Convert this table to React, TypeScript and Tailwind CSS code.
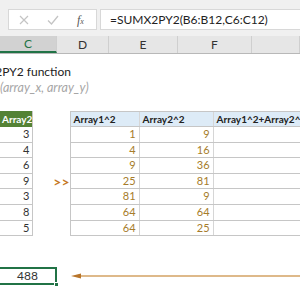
const leftVals = [3, 4, 6, 9, 3, 8, 5];
const sq1 = [1, 4, 9, 25, 81, 64, 64];
const sq2 = [9, 16, 36, 81, 9, 64, 25];

const cols = [
  { label: 'C', w: 'w-[57px]', active: true },
  { label: 'D', w: 'w-[52px]' },
  { label: 'E', w: 'w-[69px]' },
  { label: 'F', w: 'w-[74px]' },
  { label: '', w: 'flex-1' },
];

export default function App() {
  return (
    <div className="w-[300px] h-[300px] overflow-hidden bg-white font-['Lato','Liberation_Sans',sans-serif] text-[11px] text-[#222]">
      {/* formula bar */}
      <div className="h-[36px] bg-[#f0f0f0] flex pt-[9px] pl-[8px]">
        <div className="w-[89px] h-[21px] bg-white border border-[#d8d8d8] flex items-center">
          <svg className="ml-[10px] w-[10px] h-[10px]" viewBox="0 0 10 10" fill="none" stroke="#c4c4c4" strokeWidth="1.2">
            <path d="M1 1l8 8M9 1l-8 8" />
          </svg>
          <svg className="ml-[18px] w-[12px] h-[10px]" viewBox="0 0 12 10" fill="none" stroke="#c4c4c4" strokeWidth="1.3">
            <path d="M1 5.5l3.5 3.5L11 1" />
          </svg>
          <span className="ml-[18px] font-['Liberation_Serif',serif] italic text-[12px] text-[#555]">
            f<span className="text-[8px]">x</span>
          </span>
        </div>
        <div className="ml-[3px] flex-1 h-[21px] bg-white border border-r-0 border-[#d8d8d8] flex items-center pl-[9px] text-[12px] text-[#222] whitespace-nowrap">
          =SUMX2PY2(B6:B12,C6:C12)
        </div>
      </div>

      {/* column headers */}
      <div className="h-[18px] flex bg-[#e6e6e6] border-b border-[#b8b8b8]">
        {cols.map((c, i) => (
          <div
            key={i}
            className={`${c.w} h-full flex items-center justify-center text-[12px] border-r border-[#cfcfcf] ${
              c.active ? 'bg-[#d2d2d2] text-[#217346] border-b-2 border-b-[#217346]' : 'text-[#333]'
            }`}
          >
            {c.label}
          </div>
        ))}
      </div>

      {/* sheet */}
      <div className="pt-[9px]">
        <div className="h-[17px] flex items-center text-[12px] text-[#222] whitespace-nowrap -ml-[39px]">
          SUMX2PY2 function
        </div>
        <div className="h-[16px] flex items-center text-[12.5px] italic text-[#a6a6a6] whitespace-nowrap">
          (array_x, array_y)
        </div>
        <div className="h-[15px]" />

        <div className="flex">
          {/* left table */}
          <div className="w-[57px]">
            <div className="h-[16px] bg-[#548235] text-white font-bold text-[10px] flex items-center pl-[2px] border-r border-[#c6c6c6]">
              Array2
            </div>
            {leftVals.map((v, i) => (
              <div key={i} className="h-[15.6px] border-b border-r border-[#c6c6c6] flex items-center justify-end pr-[3px] text-[#333]">
                {v}
              </div>
            ))}
          </div>

          {/* middle */}
          <div className="w-[52px] pt-[16px]">
            <div className="h-[46.8px]" />
            <div className="h-[15.6px] flex items-center pl-[20px] text-[#c5781f] font-bold text-[14px]">&gt;&gt;</div>
          </div>

          {/* right table */}
          <div className="flex-1 border-l border-[#c6c6c6]">
            <div className="h-[16px] flex bg-[#ddebf7] border-t border-b border-[#c6c6c6] font-bold text-[10px] text-[#222]">
              <div className="w-[69px] pl-[3px] flex items-center border-r border-[#d6d6d6]">Array1^2</div>
              <div className="w-[74px] pl-[3px] flex items-center border-r border-[#d6d6d6]">Array2^2</div>
              <div className="flex-1 pl-[3px] flex items-center whitespace-nowrap overflow-hidden">Array1^2+Array2^2</div>
            </div>
            {sq1.map((v, i) => (
              <div key={i} className="h-[15.6px] flex border-b border-[#c6c6c6] text-[#a67c2a]">
                <div className="w-[69px] flex items-center justify-end pr-[3px] border-r border-[#d6d6d6]">{v}</div>
                <div className="w-[74px] flex items-center justify-end pr-[3px] border-r border-[#d6d6d6]">{sq2[i]}</div>
                <div className="flex-1" />
              </div>
            ))}
          </div>
        </div>

        <div className="h-[31px]" />

        {/* result row */}
        <div className="flex items-center h-[18px]">
          <div className="relative w-[57px] h-[18px] border-2 border-l-0 border-[#217346] flex items-center justify-center text-[12px] text-[#333]">
            488
            <div className="absolute -right-[4px] -bottom-[4px] w-[5px] h-[5px] bg-[#217346] border border-white" />
          </div>
          <svg className="ml-[14px] flex-1 h-[10px]" viewBox="0 0 229 10" preserveAspectRatio="none">
            <line x1="8" y1="5" x2="229" y2="5" stroke="#deb98a" strokeWidth="2" />
            <path d="M0 5L10 2.5V7.5Z" fill="#b8752a" />
          </svg>
        </div>
      </div>
    </div>
  );
}
